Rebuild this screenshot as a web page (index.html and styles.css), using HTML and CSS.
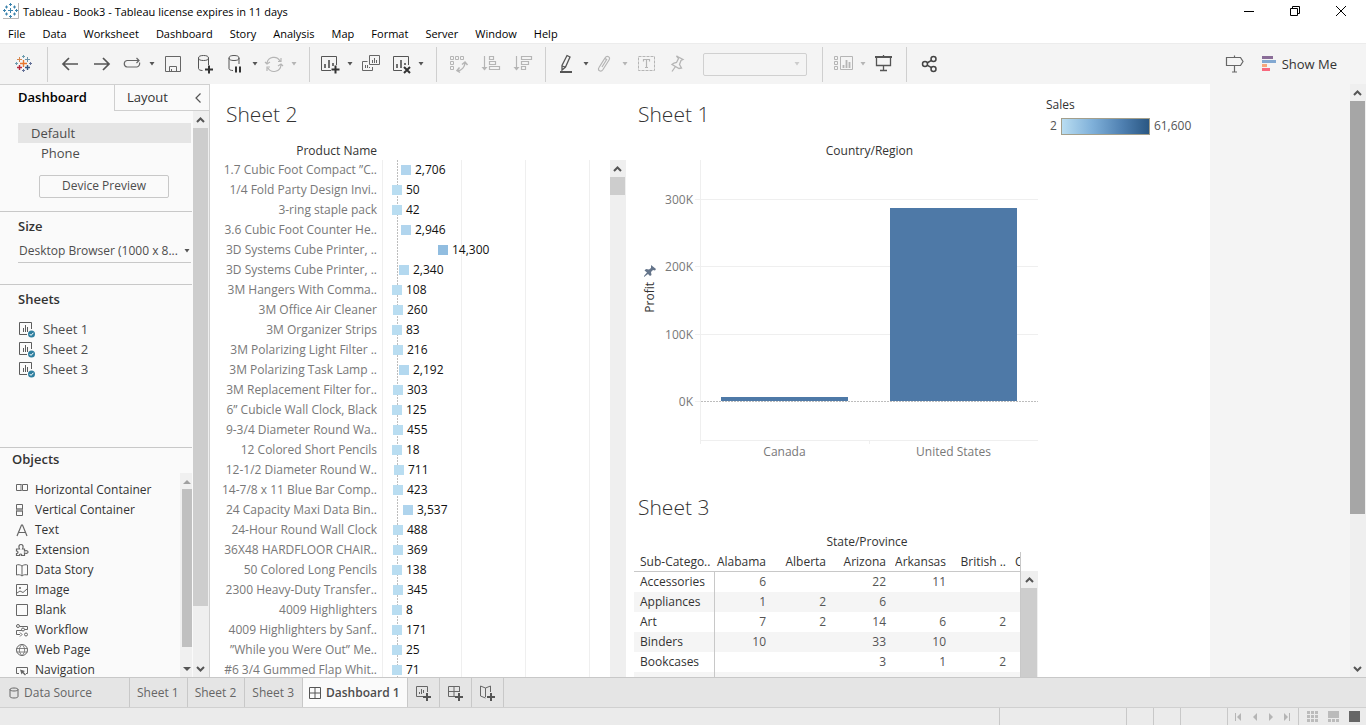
FILE: index.html
```html
<!DOCTYPE html>
<html lang="en">
<head>
<meta charset="utf-8">
<title>Tableau - Book3</title>
<link rel="stylesheet" href="styles.css">
</head>
<body>
<svg class="defs" aria-hidden="true">
  <symbol id="caret" viewBox="0 0 8 4"><path d="M1.500 0h5L4 3.500z" fill="currentColor"/></symbol>
  <symbol id="up" viewBox="0 0 9 6"><path d="M1 5l3.500-3.500L8 5" fill="none" stroke="currentColor" stroke-width="2"/></symbol>
  <symbol id="down" viewBox="0 0 9 6"><path d="M1 1l3.500 3.500L8 1" fill="none" stroke="currentColor" stroke-width="2"/></symbol>
  <symbol id="sheet" viewBox="0 0 18 18">
    <path d="M9 14.500H1.500V2.500h12V9M5.500 12V8M7.500 12V5M9.500 12V7" fill="none" stroke="#5c5c5c"/>
    <circle cx="13.500" cy="14" r="3.500" fill="#2f7f9f"/><path d="M11.700 14l1.300 1.400 2.400-2.600" fill="none" stroke="#fff"/>
  </symbol>
</svg>

<header class="titlebar">
  <svg class="app-icon" viewBox="0 0 16 16"><path d="M15.500 0v15.500H0" fill="none" stroke="#b5b5b5"/><g stroke="#3c84ad" fill="none"><path d="M7.500 5v5M5 7.500h5M3.500 2.500v3M2 4h3M11.500 2.500v3M10 4h3M3.500 9.500v3M2 11h3M11.500 9.500v3M10 11h3M7.500 0v3M6 1.500h3M7.500 12v3M6 13.500h3M0 7.500h3M1.500 6v3M12 7.500h3M13.500 6v3"/></g></svg>
  <h1 class="app-title">Tableau - Book3 - Tableau license expires in 11 days</h1>
  <div class="window-buttons">
    <button aria-label="Minimize"><svg viewBox="0 0 10 10"><path d="M0 5.500h10" stroke="#000"/></svg></button>
    <button aria-label="Restore"><svg viewBox="0 0 10 10"><path d="M.5 2.500h7v7h-7zM2.500 2V.5h7v7H8" fill="none" stroke="#000"/></svg></button>
    <button aria-label="Close"><svg viewBox="0 0 10 10"><path d="M0 0l10 10M10 0L0 10" stroke="#000"/></svg></button>
  </div>
</header>

<nav class="menubar">
  <button>File</button><button>Data</button><button>Worksheet</button><button>Dashboard</button><button>Story</button><button>Analysis</button><button>Map</button><button>Format</button><button>Server</button><button>Window</button><button>Help</button>
</nav>

<div class="toolbar">
  <button class="tool logo" aria-label="Start page"><svg viewBox="0 0 20 20"><g fill="none"><path d="M9.500 6v7M6 9.500h7" stroke="#e8762c" stroke-width="1.400"/><path d="M5.500 3v5M3 5.500h5" stroke="#d5874f"/><path d="M13.500 3v5M11 5.500h5" stroke="#6b93a8"/><path d="M5.500 11v5M3 13.500h5" stroke="#b5293d" stroke-width="1.400"/><path d="M13.500 11v5M11 13.500h5" stroke="#36567f" stroke-width="1.400"/><path d="M9.500 1v3M8 2.500h3M2.500 8v3M1 9.500h3" stroke="#6d9cae"/><path d="M9.500 15v3M8 16.500h3M16.500 8v3M15 9.500h3" stroke="#667399"/></g></svg></button>
  <div class="group">
    <button class="tool" aria-label="Undo"><svg viewBox="0 0 20 20"><path d="M18 10H3M9 4l-6 6 6 6" fill="none" stroke="#555" stroke-width="1.700"/></svg></button>
    <button class="tool" aria-label="Redo"><svg viewBox="0 0 20 20"><path d="M2 10h15M11 4l6 6-6 6" fill="none" stroke="#555" stroke-width="1.700"/></svg></button>
    <button class="tool pair" aria-label="Replay"><svg viewBox="0 0 20 20"><path d="M15.500 13H5a3.300 3.300 0 0 1 0-6.500h12M14.500 4L17 6.500 14.500 9M17.500 8.500a3.500 3.500 0 0 1-2.500 4.500" fill="none" stroke="#666" stroke-width="1.200"/></svg><svg class="caret"><use href="#caret"/></svg></button>
    <button class="tool" aria-label="Save"><svg viewBox="0 0 20 20"><path d="M2.500 2.500h15v15h-15zM6.500 17v-4.500h7V17M8.500 17v-2" fill="none" stroke="#666"/></svg></button>
    <button class="tool" aria-label="New data source"><svg viewBox="0 0 20 20"><ellipse cx="8.500" cy="4" rx="5" ry="2.500" fill="none" stroke="#555"/><path d="M3.500 4v10.500c0 1.300 2 2 4 2M13.500 4v7" fill="none" stroke="#555"/><path d="M14 11.500v8M10 15.500h8" stroke="#333" stroke-width="2"/></svg></button>
    <button class="tool pair" aria-label="Pause updates"><svg viewBox="0 0 20 20"><ellipse cx="9" cy="4" rx="5" ry="2.500" fill="none" stroke="#555"/><path d="M4 4v10.500c0 1.300 2 2 4 2M14 4v6" fill="none" stroke="#555"/><path d="M11 12.500v6M15 12.500v6" stroke="#333" stroke-width="2"/></svg><svg class="caret"><use href="#caret"/></svg></button>
    <button class="tool pair off" aria-label="Run update"><svg viewBox="0 0 20 20"><path d="M3 9a7 7 0 0 1 13-2M17 11a7 7 0 0 1-13 3M14 7.500h3V4M6 13H3v4M1 8l2 2 3-2M14 12l3-2 2 2" fill="none" stroke="currentColor" stroke-width="1.200"/></svg><svg class="caret"><use href="#caret"/></svg></button>
  </div>
  <div class="group">
    <button class="tool pair" aria-label="New worksheet"><svg viewBox="0 0 20 20"><path d="M11 16.500H1.500v-14h15V11" fill="none" stroke="#555"/><path d="M5 14v-4M9 14V6M13 12V9" stroke="#444" stroke-width="1.500"/><path d="M15.500 11.500v8M11.500 15.500h8" stroke="#333" stroke-width="2"/></svg><svg class="caret"><use href="#caret"/></svg></button>
    <button class="tool" aria-label="Duplicate"><svg viewBox="0 0 20 20"><path d="M8.500 1.500h10v9h-10zM6.500 7.500h-5v9h10V13M11.500 9V6M13.500 9V4M15.500 9V6M4.500 14v-3M6.500 14v-3M8.500 14v-1" fill="none" stroke="#666"/></svg></button>
    <button class="tool pair" aria-label="Clear sheet"><svg viewBox="0 0 20 20"><path d="M11 16.500H2.500v-14h15V11" fill="none" stroke="#555"/><path d="M6 14v-4M10 14V6M14 11V9" stroke="#444" stroke-width="1.500"/><path d="M13 13l6 6M19 13l-6 6" stroke="#333" stroke-width="2"/></svg><svg class="caret"><use href="#caret"/></svg></button>
  </div>
  <div class="group">
    <button class="tool off" aria-label="Swap"><svg viewBox="0 0 20 20"><path d="M1.500 2.500h3v3h-3zM6.500 2.500h3v3h-3zM11.500 2.500h3v3h-3zM1.500 7.500h3v3h-3zM1.500 12.500h3v3h-3z" fill="none" stroke="currentColor"/><path d="M8.500 17a9 9 0 0 0 7.500-8M13 10.500L16 8l2.500 3M10.500 13.500L8 16.500l3 2" fill="none" stroke="currentColor" stroke-width="1.500"/></svg></button>
    <button class="tool off" aria-label="Sort ascending"><svg viewBox="0 0 20 20"><path d="M3.500 2v13M8.500 2.500h4v3h-4zM8.500 7.500h6v3h-6zM8.500 12.500h10v3h-10z" fill="none" stroke="currentColor" stroke-width="1.200"/><path d="M.5 13h6l-3 3.500z" fill="currentColor"/></svg></button>
    <button class="tool off" aria-label="Sort descending"><svg viewBox="0 0 20 20"><path d="M3.500 2v13M8.500 2.500h10v3h-10zM8.500 7.500h7v3h-7zM8.500 12.500h4v3h-4z" fill="none" stroke="currentColor" stroke-width="1.200"/><path d="M.5 13h6l-3 3.500z" fill="currentColor"/></svg></button>
  </div>
  <div class="group">
    <button class="tool pair" aria-label="Highlight"><svg viewBox="0 0 20 20"><path d="M11 1.500l3 1.500-4.500 10-3.500 3V11.500zM6 12l3.500 1" fill="none" stroke="#555" stroke-width="1.300"/><path d="M4 18h12" stroke="#555" stroke-width="2"/></svg><svg class="caret"><use href="#caret"/></svg></button>
    <button class="tool pair off" aria-label="Group members"><svg viewBox="0 0 20 20"><path d="M7 13l5-8M5 12l5-8c2-3 6-1 4 2l-6 9.500c-2 3-6 1-4-2l5-8c1-1.500 3-.5 2 1l-4 6.500" fill="none" stroke="currentColor" stroke-width="1.200"/></svg><svg class="caret"><use href="#caret"/></svg></button>
    <button class="tool off" aria-label="Show mark labels"><svg viewBox="0 0 20 20"><path d="M2.500 2.500h16v14h-16z" fill="none" stroke="currentColor" stroke-dasharray="3 1"/><path d="M7.500 7.500v-2h6v2M10.500 5.500v8M9 13.500h3" fill="none" stroke="currentColor" stroke-width="1.200"/></svg></button>
    <button class="tool off" aria-label="Fix axes"><svg viewBox="0 0 20 20"><path d="M8.500 2l6.500 3.500-2 1-1.500 4 2 3.500-2.500.5L4 10.500 6 9l2.500-.5L10.500 4.500zM7.500 12.500L4 17.500" fill="none" stroke="currentColor" stroke-width="1.300"/></svg></button>
    <span class="fit"><select aria-label="Fit" disabled><option></option></select><svg class="caret"><use href="#caret"/></svg></span>
  </div>
  <div class="group">
    <button class="tool pair off" aria-label="Show cards"><svg viewBox="0 0 20 20"><path d="M1.500 2.500h3v3h-3zM1.500 7.500h3v3h-3zM1.500 12.500h3v3h-3zM7.500 2.500h12v13h-12z" fill="none" stroke="currentColor"/><path d="M10.500 14v-3M13.500 14V6M16.500 14V8" stroke="currentColor" stroke-width="1.800"/></svg><svg class="caret"><use href="#caret"/></svg></button>
    <button class="tool" aria-label="Presentation mode"><svg viewBox="0 0 20 20"><path d="M1 3h17" stroke="#555" stroke-width="2"/><path d="M2.500 3v8.500h14V3M9.500 1v2M9.500 11.500v5M6 16.500h7" fill="none" stroke="#555" stroke-width="1.300"/></svg></button>
  </div>
  <div class="group">
    <button class="tool" aria-label="Share"><svg viewBox="0 0 20 20"><g fill="none" stroke="#444" stroke-width="1.500"><circle cx="6" cy="10" r="2.500"/><circle cx="14.500" cy="5" r="2.500"/><circle cx="14.500" cy="15" r="2.500"/><path d="M8 9l4.500-2.700M8 11.200l4.500 2.500"/></g></svg></button>
  </div>
  <div class="toolbar-end">
    <button class="tool" aria-label="Guide"><svg viewBox="0 0 20 20"><path d="M2.500 3.500h14l2.500 4-2.500 4h-14zM10.500 1.500v2M10.500 11.500v6M8 18h5" fill="none" stroke="#666" stroke-width="1.200"/></svg></button>
    <button class="show-me"><svg viewBox="0 0 14 15"><path fill="#8a6d98" d="M0 0h11v3H0z"/><path fill="#82a8d1" d="M0 4h14v3H0z"/><path fill="#f6a77c" d="M0 8h5v3H0z"/><path fill="#f8697e" d="M0 12h8v3H0z"/></svg>Show Me</button>
  </div>
</div>

<main class="workspace">
  <aside class="sidebar">
    <div class="side-tabs">
      <button class="active">Dashboard</button>
      <button class="layout-tab">Layout</button>
      <button class="collapse" aria-label="Collapse"><svg viewBox="0 0 6 10"><path d="M5.500 .5L1 5l4.500 4.500" fill="none" stroke="#555" stroke-width="1.200"/></svg></button>
    </div>
    <div class="side-scroll">
      <div class="side-content">
        <section class="devices">
          <button class="device selected">Default</button>
          <button class="device phone">Phone</button>
          <button class="preview">Device Preview</button>
        </section>
        <section class="size">
          <h2>Size</h2>
          <span class="size-select"><select aria-label="Size"><option>Desktop Browser (1000 x 8...</option></select><svg class="caret"><use href="#caret"/></svg></span>
        </section>
        <section class="sheets">
          <h2>Sheets</h2>
          <ul>
            <li><svg><use href="#sheet"/></svg>Sheet 1</li>
            <li><svg><use href="#sheet"/></svg>Sheet 2</li>
            <li><svg><use href="#sheet"/></svg>Sheet 3</li>
          </ul>
        </section>
        <section class="objects">
          <h2>Objects</h2>
          <div class="object-scroll">
            <ul>
              <li><svg viewBox="0 0 14 14"><path d="M1.500 1.500h5v6h-5zM7.500 1.500h5v6h-5z" fill="none" stroke="#666"/><path d="M5 2h2v5H5z" fill="#bbb"/></svg>Horizontal Container</li>
              <li><svg viewBox="0 0 14 14"><path d="M1.500 1.500h6v5h-6zM1.500 7.500h6v5h-6z" fill="none" stroke="#666"/><path d="M2 5h5v4H2z" fill="#999"/></svg>Vertical Container</li>
              <li><svg viewBox="0 0 14 14"><path d="M2 13L6.500 2h1L12 13M4 9.500h6" fill="none" stroke="#666" stroke-width="1.200"/></svg>Text</li>
              <li><svg viewBox="0 0 14 14"><path d="M1.500 6h3c-1.500-3 0-4.500 1.500-4.500S9 3 7.500 6h2v2c2-1 3.500 0 3.500 1s-1.500 2-3.500 1v2.500h-3c1-2-2.500-2-2 0h-3v-2c2 0 2-2.500 0-2.500z" fill="none" stroke="#666" stroke-width="1.200"/></svg>Extension</li>
              <li><svg viewBox="0 0 14 14"><path d="M7 3C5 1.500 3 1.500 1.500 2v10c2-.5 4-.5 5.500 1 1.500-1.500 3.500-1.500 5.500-1V2C11 1.500 9 1.500 7 3zv10" fill="none" stroke="#666"/></svg>Data Story</li>
              <li><svg viewBox="0 0 14 14"><path d="M1.500 1.500h11v11h-11zM2 10l3-2 3 1.500L12 6" fill="none" stroke="#666"/><circle cx="5" cy="5" r="1" fill="#666"/></svg>Image</li>
              <li><svg viewBox="0 0 14 14"><path d="M1.500 1.500h11v11h-11z" fill="none" stroke="#666"/></svg>Blank</li>
              <li><svg viewBox="0 0 14 14"><path d="M1.500 3.500h2M5 3.500h7.500v3H9M1.500 7.500H9M1.500 7.500v4H5M5 9.500l2 2-2 2" fill="none" stroke="#666"/><g fill="#fafafa" stroke="#666"><circle cx="3" cy="3" r="1.500"/><circle cx="8" cy="6.500" r="1.500"/><circle cx="11" cy="11.500" r="1.500"/></g></svg>Workflow</li>
              <li><svg viewBox="0 0 14 14"><circle cx="7" cy="7" r="5.500" fill="none" stroke="#666"/><path d="M1.500 5.500h11M1.500 9h11M7 1.500c-3.500 3-3.500 8 0 11 3.500-3 3.500-8 0-11" fill="none" stroke="#666" stroke-width=".8"/></svg>Web Page</li>
              <li><svg viewBox="0 0 14 14"><path d="M4 10.500H1.500v-6h11v6H11" fill="none" stroke="#666"/><path d="M5 6.500l5 1.500-1.500 1L11 11.500l-1 1L7.500 10l-1 1.500z" fill="#666"/></svg>Navigation</li>
            </ul>
            <div class="mini-scroll"><svg viewBox="0 0 8 4"><path d="M0 4h8L4 0z" fill="#a0a0a0"/></svg><i></i><svg viewBox="0 0 8 4"><path d="M0 0h8L4 4z" fill="#555"/></svg></div>
          </div>
        </section>
      </div>
      <div class="scrollbar side-bar"><svg><use href="#up"/></svg><i></i><svg><use href="#down"/></svg></div>
    </div>
  </aside>

  <div class="canvas">
    <div class="dashboard">
      <section class="sheet2">
        <h2 class="sheet-title">Sheet 2</h2>
        <div class="field-name">Product Name</div>
        <div class="product-scroll">
          <div class="product-rows">
            <div class="row"><span>1.7 Cubic Foot Compact ”C..</span><div><b style="margin-left:9px;background:#b1d5ee"></b>2,706</div></div>
            <div class="row"><span>1/4 Fold Party Design Invi..</span><div><b style="margin-left:0px"></b>50</div></div>
            <div class="row"><span>3-ring staple pack</span><div><b style="margin-left:0px"></b>42</div></div>
            <div class="row"><span>3.6 Cubic Foot Counter He..</span><div><b style="margin-left:9px;background:#b1d5ee"></b>2,946</div></div>
            <div class="row"><span>3D Systems Cube Printer, ..</span><div><b style="margin-left:46px;background:#91bde0"></b>14,300</div></div>
            <div class="row"><span>3D Systems Cube Printer, ..</span><div><b style="margin-left:7px;background:#b3d8ef"></b>2,340</div></div>
            <div class="row"><span>3M Hangers With Comma..</span><div><b style="margin-left:0px"></b>108</div></div>
            <div class="row"><span>3M Office Air Cleaner</span><div><b style="margin-left:1px"></b>260</div></div>
            <div class="row"><span>3M Organizer Strips</span><div><b style="margin-left:0px"></b>83</div></div>
            <div class="row"><span>3M Polarizing Light Filter ..</span><div><b style="margin-left:1px"></b>216</div></div>
            <div class="row"><span>3M Polarizing Task Lamp ..</span><div><b style="margin-left:7px;background:#b3d8ef"></b>2,192</div></div>
            <div class="row"><span>3M Replacement Filter for..</span><div><b style="margin-left:1px"></b>303</div></div>
            <div class="row"><span>6” Cubicle Wall Clock, Black</span><div><b style="margin-left:0px"></b>125</div></div>
            <div class="row"><span>9-3/4 Diameter Round Wa..</span><div><b style="margin-left:1px"></b>455</div></div>
            <div class="row"><span>12 Colored Short Pencils</span><div><b style="margin-left:0px"></b>18</div></div>
            <div class="row"><span>12-1/2 Diameter Round W..</span><div><b style="margin-left:2px"></b>711</div></div>
            <div class="row"><span>14-7/8 x 11 Blue Bar Comp..</span><div><b style="margin-left:1px"></b>423</div></div>
            <div class="row"><span>24 Capacity Maxi Data Bin..</span><div><b style="margin-left:11px;background:#afd4ed"></b>3,537</div></div>
            <div class="row"><span>24-Hour Round Wall Clock</span><div><b style="margin-left:1px"></b>488</div></div>
            <div class="row"><span>36X48 HARDFLOOR CHAIR..</span><div><b style="margin-left:1px"></b>369</div></div>
            <div class="row"><span>50 Colored Long Pencils</span><div><b style="margin-left:0px"></b>138</div></div>
            <div class="row"><span>2300 Heavy-Duty Transfer..</span><div><b style="margin-left:1px"></b>345</div></div>
            <div class="row"><span>4009 Highlighters</span><div><b style="margin-left:0px"></b>8</div></div>
            <div class="row"><span>4009 Highlighters by Sanf..</span><div><b style="margin-left:0px"></b>171</div></div>
            <div class="row"><span>”While you Were Out” Me..</span><div><b style="margin-left:0px"></b>25</div></div>
            <div class="row"><span>#6 3/4 Gummed Flap Whit..</span><div><b style="margin-left:0px"></b>71</div></div>
          </div>
          <div class="scrollbar"><svg><use href="#up"/></svg><i></i></div>
        </div>
      </section>

      <div class="middle">
        <section class="sheet1">
          <h2 class="sheet-title">Sheet 1</h2>
          <div class="field-name">Country/Region</div>
          <div class="bar-chart">
            <div class="axis-title"><svg viewBox="0 0 12 12"><path d="M7 0l5 4-1 1.500-2-.5-2 2 .5 3L6 11 4 9l-4 3-.5-.5L3 7.500.5 5.500 2 4l3 .500L7 3z" fill="#64748a"/></svg><span>Profit</span></div>
            <div class="ticks"><span>300K</span><span>200K</span><span>100K</span><span>0K</span></div>
            <svg class="plot" viewBox="0 0 343 284" preserveAspectRatio="none">
              <path d="M0 39.500h343M0 106.500h343M0 174.500h343M0 241.500h5M5.500 0v284M5 280.500h338M174.500 280v4" fill="none" stroke="#efefef"/>
              <path d="M6 241.500h337" stroke="#bdbdbd" stroke-dasharray="2 1"/>
              <path d="M26 237h127v4H26zM195 48h127v193H195z" fill="#4e79a7"/>
            </svg>
            <div class="categories"><span>Canada</span><span>United States</span></div>
          </div>
        </section>
        <section class="sheet3">
          <h2 class="sheet-title">Sheet 3</h2>
          <div class="field-name">State/Province</div>
          <div class="crosstab">
            <table>
              <thead><tr><th>Sub-Catego..</th><th>Alabama</th><th>Alberta</th><th>Arizona</th><th>Arkansas</th><th>British ..</th><th>C</th></tr></thead>
              <tbody>
                <tr><th>Accessories</th><td>6</td><td></td><td>22</td><td>11</td><td></td><td></td></tr>
                <tr><th>Appliances</th><td>1</td><td>2</td><td>6</td><td></td><td></td><td></td></tr>
                <tr><th>Art</th><td>7</td><td>2</td><td>14</td><td>6</td><td>2</td><td></td></tr>
                <tr><th>Binders</th><td>10</td><td></td><td>33</td><td>10</td><td></td><td></td></tr>
                <tr><th>Bookcases</th><td></td><td></td><td>3</td><td>1</td><td>2</td><td></td></tr>
                <tr><th></th><td></td><td></td><td></td><td></td><td></td><td></td></tr>
              </tbody>
            </table>
            <div class="scrollbar"><svg><use href="#up"/></svg><i></i></div>
          </div>
        </section>
      </div>

      <section class="legend">
        <h2>Sales</h2>
        <div><span>2</span><i></i><span>61,600</span></div>
      </section>
    </div>
    <div class="scrollbar page-bar"><svg><use href="#up"/></svg><i></i><svg><use href="#down"/></svg></div>
  </div>
</main>

<nav class="sheet-tabs">
  <button class="source"><svg viewBox="0 0 10 12"><path d="M1 2.500v7C1 11.500 9 11.500 9 9.500v-7C9 .5 1 .5 1 2.500s8 2 8 0" fill="none" stroke="#666"/></svg>Data Source</button>
  <button>Sheet 1</button><button>Sheet 2</button><button>Sheet 3</button>
  <button class="current"><svg viewBox="0 0 12 12"><path d="M.5 .5h11v11H.5zM.5 6h11M6 .5v11" fill="none" stroke="#555"/></svg>Dashboard 1</button>
  <button class="new" aria-label="New worksheet"><svg viewBox="0 0 16 16"><path d="M8 11.500H1.500v-10h11V7M4.500 9V7M6.500 9V4M8.500 8V5" fill="none" stroke="#666"/><path d="M12 8v8M8 12h8" stroke="#555" stroke-width="2"/></svg></button>
  <button class="new" aria-label="New dashboard"><svg viewBox="0 0 16 16"><path d="M8 11.500H1.500v-10h11V7M1.500 6.500h11M7 1.500v10" fill="none" stroke="#666"/><path d="M12 8v8M8 12h8" stroke="#555" stroke-width="2"/></svg></button>
  <button class="new" aria-label="New story"><svg viewBox="0 0 16 16"><path d="M6.500 13L1.500 11V1l5 2 5-2v6M6.500 3v9" fill="none" stroke="#666"/><path d="M12 8v8M8 12h8" stroke="#555" stroke-width="2"/></svg></button>
</nav>

<footer class="status">
  <span class="cell summary"></span><span class="cell"></span><span class="cell"></span><span class="cell wide"></span>
  <div class="cell pager">
    <button aria-label="First"><svg viewBox="0 0 8 8"><path d="M0 0h1v8H0zM6 0v8L2 4z" fill="#b5b5b5"/></svg></button>
    <button aria-label="Previous"><svg viewBox="0 0 8 8"><path d="M6 0v8L2 4z" fill="#b5b5b5"/></svg></button>
    <button aria-label="Next"><svg viewBox="0 0 8 8"><path d="M2 0v8l4-4z" fill="#b5b5b5"/></svg></button>
    <button aria-label="Last"><svg viewBox="0 0 8 8"><path d="M6 0h1v8H6zM1 0v8l4-4z" fill="#b5b5b5"/></svg></button>
  </div>
  <div class="cell views">
    <button aria-label="Sheet sorter"><svg viewBox="0 0 11 11"><path d="M0 0h3v3H0zM4 0h3v3H4zM8 0h3v3H8zM0 4h3v3H0zM4 4h3v3H4zM8 4h3v3H8zM0 8h3v3H0zM4 8h3v3H4zM8 8h3v3H8z" fill="#bbb"/></svg></button>
    <button aria-label="Filmstrip"><svg viewBox="0 0 11 11"><path d="M0 0h11v7H0zM0 8h3v3H0zM4 8h3v3H4zM8 8h3v3H8z" fill="#bbb"/></svg></button>
    <button aria-label="Tabs"><svg viewBox="0 0 11 11"><path d="M0 0h11v11H0z" fill="#666"/></svg></button>
  </div>
</footer>
</body>
</html>
```
FILE: styles.css
```css
* { box-sizing: border-box; }
body {
  margin: 0;
  height: 100vh;
  display: flex;
  flex-direction: column;
  overflow: hidden;
  background: #fff;
  color: #333;
  font: 12px/20px "Open Sans", "Noto Sans", sans-serif;
}
button {
  padding: 0;
  border: 0;
  background: none;
  color: inherit;
  font: inherit;
  white-space: nowrap;
}
h1, h2, ul { margin: 0; padding: 0; font: inherit; }
ul { list-style: none; }
svg { display: block; flex: none; }
.defs { position: absolute; width: 0; height: 0; }

/* Title bar and menu */
.titlebar { display: flex; align-items: center; height: 22px; padding: 0 2px 0 3px; color: #000; font-size: 11px; }
.app-icon { width: 16px; height: 16px; }
.app-title { flex: 1; margin-left: 4px; padding-top: 2px; }
.window-buttons { display: flex; }
.window-buttons button { width: 46px; display: flex; justify-content: center; }
.window-buttons svg { width: 10px; height: 10px; }
.menubar { display: flex; gap: 17px; height: 21px; padding: 2px 8px 0; color: #000; font-size: 11px; }

/* Toolbar */
.toolbar { display: flex; align-items: center; height: 41px; background: #f4f4f4; border-top: 1px solid #ececec; color: #666; flex: none; }
.tool { display: flex; align-items: center; gap: 6px; color: #555; }
.tool svg { width: 20px; height: 20px; }
.tool .caret, .caret { width: 8px; height: 4px; }
.tool.off { color: #b5b5b5; }
.logo { margin: 0 13px 0 14px; }
.group { display: flex; align-items: center; gap: 12px; height: 35px; padding: 0 12px; border-left: 1px solid #cfcfcf; }
.pair { margin: 0 -5px 0 -2px; }
.pair:last-child { margin-right: -1px; }
.fit { display: grid; align-items: center; margin: 0 3px; color: #ccc; }
.fit select { grid-area: 1 / 1; width: 104px; height: 23px; appearance: none; border: 1px solid #d0d0d0; border-radius: 2px; background: #f4f4f4; opacity: 1; }
.fit .caret { grid-area: 1 / 1; justify-self: end; margin-right: 6px; }
.toolbar-end { display: flex; align-items: center; gap: 18px; margin-left: auto; padding-right: 29px; }
.show-me { display: flex; align-items: center; gap: 6px; padding-bottom: 1px; color: #333; font-size: 13px; }
.show-me svg { width: 14px; height: 15px; }

/* Workspace */
.workspace { flex: 1; min-height: 0; display: flex; }
.sidebar { width: 210px; flex: none; display: flex; flex-direction: column; background: #fafafa; border: solid #d0d0d0; border-width: 1px 1px 0 0; }
.side-tabs { display: flex; height: 26px; font-size: 13px; color: #333; }
.side-tabs .active { width: 114px; padding: 0 0 2px 18px; text-align: left; color: #000; font-weight: 600; }
.layout-tab { flex: 1; padding: 0 0 1px 12px; text-align: left; border: solid #cfcfcf; border-width: 0 0 1px 1px; }
.collapse { width: 14px; border-bottom: 1px solid #cfcfcf; }
.collapse svg { width: 6px; height: 10px; }
.side-scroll { flex: 1; min-height: 0; display: flex; }
.side-content { flex: 1; min-width: 0; display: flex; flex-direction: column; margin-right: 1px; }
.side-content section { flex: none; border-bottom: 1px solid #c8c8c8; color: #4d4d4d; }
.side-content h2 { font-size: 13px; font-weight: 600; color: #333; }
.devices { display: flex; flex-direction: column; height: 101px; padding: 12px 1px 0 18px; font-size: 13px; }
.device { height: 20px; padding-left: 13px; text-align: left; }
.selected { background: #e5e5e5; }
.phone { padding-left: 23px; }
.preview { width: 130px; height: 23px; margin: 12px 0 0 21px; padding-bottom: 1px; border: 1px solid #c8c8c8; border-radius: 2px; font-size: 12px; }
.size { height: 73px; padding: 4px 0 0 18px; }
.size-select { display: grid; align-items: center; height: 25px; margin: 2px 1px 0 0; padding-top: 2px; border-bottom: 1px solid #c8c8c8; color: #555; }
.size-select select { grid-area: 1 / 1; appearance: none; border: 0; background: none; font: inherit; color: #4d4d4d; height: 20px; padding: 0 0 0 1px; min-width: 0; }
.size-select .caret { grid-area: 1 / 1; justify-self: end; }
.sheets { height: 163px; padding: 4px 0 0 18px; font-size: 13px; }
.sheets ul { padding-top: 10px; }
.sheets li { display: flex; align-items: center; height: 20px; gap: 7px; }
.sheets li svg { width: 18px; height: 18px; }
.side-content .objects { flex: 1; min-height: 0; display: flex; flex-direction: column; border: 0; color: #333; }
.objects h2 { padding: 1px 12px; }
.object-scroll { flex: 1; min-height: 0; display: flex; margin-top: 3px; overflow: hidden; }
.object-scroll ul { flex: 1; padding: 7px 0 0 15px; }
.object-scroll li { display: flex; align-items: center; gap: 6px; height: 20px; }
.object-scroll li svg { width: 14px; height: 14px; }
.mini-scroll { width: 12px; display: flex; flex-direction: column; align-items: center; padding: 7px 0 6px 2px; background: #f0f0f0; }
.mini-scroll svg { width: 8px; height: 4px; }
.mini-scroll i { align-self: stretch; flex: 1; margin: 5px 0 20px; background: #c0c0c0; }

/* Scroll bars */
.scrollbar { flex: none; width: 16px; display: flex; flex-direction: column; align-items: center; padding: 6px 1px 5px 0; background: #efefef; color: #555; }
.scrollbar svg { width: 9px; height: 6px; }
.scrollbar i { flex: 1; align-self: stretch; margin-top: 5px; background: #cdcdcd; }
.side-bar i { margin-bottom: 60px; }
.page-bar i { margin-bottom: 152px; background: #a6a6a6; }

/* Dashboard */
.canvas { flex: 1; min-width: 0; display: flex; background: #f4f4f4; }
.dashboard { flex: 1; min-width: 0; display: grid; grid-template-columns: 416fr 412fr 172fr; margin-right: 140px; background: #fff; overflow: hidden; }
.sheet-title { font-size: 21px; line-height: 28px; font-weight: 300; color: #333; }
.field-name { height: 19px; font-weight: 500; color: #333; }
.sheet2 { display: flex; flex-direction: column; min-height: 0; padding-top: 16px; }
.sheet2 .sheet-title { padding-left: 16px; }
.sheet2 .field-name { width: 167px; margin-top: 13px; text-align: right; }
.product-scroll { flex: 1; min-height: 0; display: flex; }
.product-rows {
  flex: 1;
  overflow: hidden;
  background:
    linear-gradient(#efefef, #efefef) 172px 0 / 1px 100% no-repeat,
    repeating-linear-gradient(#bdbdbd 0 2px, #fff 2px 3px) 187px 0 / 1px 100% no-repeat,
    linear-gradient(#efefef, #efefef) 251px 0 / 1px 100% no-repeat,
    linear-gradient(#efefef, #efefef) 315px 0 / 1px 100% no-repeat,
    linear-gradient(#efefef, #efefef) 379px 0 / 1px 100% no-repeat;
}
.row { display: flex; height: 20px; white-space: nowrap; }
.row span { width: 167px; text-align: right; color: #787878; }
.row div { display: flex; align-items: center; gap: 4px; padding-left: 15px; color: #111; }
.row b { width: 10px; height: 10px; background: #b9ddf1; }
.product-scroll i { flex: 0 0 18px; }

.middle { min-width: 0; padding: 16px 0 0 8px; }
.middle .sheet-title { padding-left: 4px; }
.sheet1 .field-name { margin-top: 13px; padding-left: 67px; text-align: center; }
.bar-chart { display: grid; grid-template-columns: 31px 30px 1fr; grid-template-rows: 284px 18px; color: #787878; }
.axis-title { display: flex; flex-direction: column; align-items: center; gap: 5px; padding-top: 105px; color: #333; font-weight: 500; }
.axis-title svg { width: 12px; height: 12px; }
.axis-title span { writing-mode: vertical-rl; transform: rotate(180deg); line-height: 16px; }
.ticks { display: flex; flex-direction: column; justify-content: space-between; align-items: flex-end; height: 222px; margin-top: 30px; padding-right: 2px; }
.plot { width: 100%; height: 284px; }
.categories { grid-column: 3; display: grid; grid-template-columns: 1fr 1fr; padding-left: 5px; text-align: center; line-height: 16px; }
.sheet3 { padding-top: 31px; }
.sheet3 .field-name { height: 20px; margin-top: 11px; padding-left: 62px; text-align: center; }
.crosstab { display: flex; }
table { flex: 1; width: 0; table-layout: fixed; border-collapse: separate; border-spacing: 0; border-right: 1px solid #c8c8c8; }
th, td { height: 20px; padding: 0 9px 0 0; text-align: right; font-weight: 400; white-space: nowrap; overflow: hidden; width: 60px; color: #555; }
th { font-weight: 500; color: #333; }
th:first-child { width: 81px; padding: 0 0 0 6px; text-align: left; }
th:last-child { width: auto; padding-right: 0; text-align: left; }
thead th { height: 20px; line-height: 19px; border-bottom: 1px solid #c8c8c8; }
tbody th { border-right: 1px solid #c8c8c8; }
tbody tr:nth-child(even) { background: #f5f5f5; }
.crosstab .scrollbar { margin-top: 19px; width: 17px; }

.legend { padding: 11px 0 0 8px; }
.legend div { display: flex; align-items: center; gap: 4px; padding-left: 4px; margin-top: 1px; color: #555; }
.legend i { width: 89px; height: 17px; border: 1px solid #a39f8c; background: linear-gradient(90deg, #b9ddf1, #7fb0d9 35%, #4e7fb0 70%, #2a5783); }

/* Sheet tabs */
.sheet-tabs { display: flex; flex: none; height: 30px; border-top: 1px solid #c8c8c8; background: #e5e5e5; color: #666; }
.sheet-tabs button { display: flex; align-items: center; padding: 0 8px 0 7px; border-right: 1px solid #c8c8c8; }
.sheet-tabs .source { width: 130px; gap: 5px; padding-left: 9px; }
.source svg { width: 10px; height: 12px; }
.sheet-tabs .current { gap: 5px; padding: 0 7px 0 6px; background: #fafafa; color: #4d4d4d; font-weight: 600; }
.current svg { width: 12px; height: 12px; }
.sheet-tabs .new { width: 32px; padding: 0; justify-content: center; }
.new svg { width: 16px; height: 16px; }

/* Status bar */
.status { display: flex; flex: none; justify-content: flex-end; height: 18px; border-top: 1px solid #d0d0d0; background: #ebebeb; }
.cell { width: 27px; border-left: 1px solid #c8c8c8; }
.summary { width: 127px; }
.wide { width: 47px; }
.pager { display: flex; align-items: center; justify-content: center; gap: 8px; width: 71px; }
.pager svg { width: 8px; height: 8px; }
.views { display: flex; align-items: center; gap: 10px; width: 68px; padding-left: 8px; }
.views svg { width: 11px; height: 11px; }
```
